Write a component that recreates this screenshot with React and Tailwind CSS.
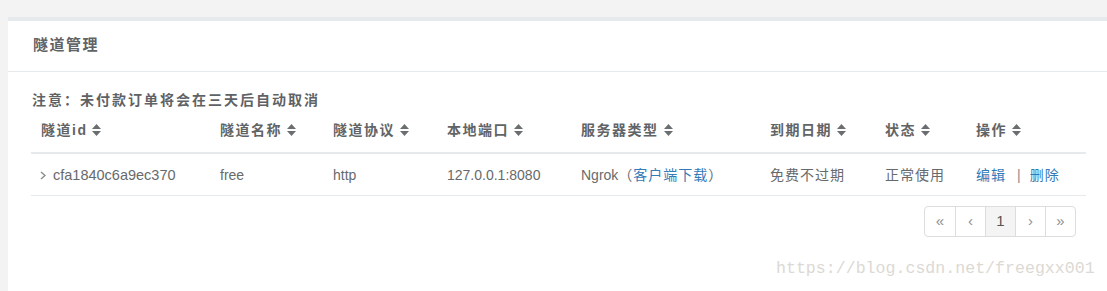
import React from 'react';

const font = { fontFamily: '"Liberation Sans", "Noto Sans CJK SC", sans-serif' };

const SortIcon = () => (
    <svg width="9" height="12" viewBox="0 0 9 12" className="ml-[5px] shrink-0">
        <path d="M4.5 0 L9 5 L0 5 Z" fill="#6b6e70" />
        <path d="M0 7 L9 7 L4.5 12 Z" fill="#6b6e70" />
    </svg>
);

const columns = [
    { label: '隧道id', w: 'w-[180px] pl-[10px]' },
    { label: '隧道名称', w: 'w-[113px] pl-[9px]' },
    { label: '隧道协议', w: 'w-[114px] pl-[9px]' },
    { label: '本地端口', w: 'w-[134px] pl-[9px]' },
    { label: '服务器类型', w: 'w-[189px] pl-[9px]' },
    { label: '到期日期', w: 'w-[115px] pl-[9px]' },
    { label: '状态', w: 'w-[91px] pl-[9px]' },
    { label: '操作', w: 'w-[119px] pl-[9px]' },
];

const pages = ['«', '‹', '1', '›', '»'];

export default function App() {
    return (
        <div className="relative min-h-[291px] bg-[#f3f3f4] pt-[17px] pl-[8px] text-[#676a6c]" style={font}>
            <div className="min-h-[274px] bg-white border-t-4 border-[#e7eaec]">
                {/* 标题 */}
                <div className="h-[51px] pt-[14px] pl-[25px] border-b border-[#e7eaec]">
                    <h5 className="text-[15px] leading-5 font-bold tracking-[1.5px] text-[#616466]">隧道管理</h5>
                </div>

                {/* 内容 */}
                <div className="pl-[23px] pr-[21px] pt-[18px]">
                    <p className="text-[14px] leading-5 font-bold tracking-[2px] pl-[1px] text-[#5f6264]">注意：未付款订单将会在三天后自动取消</p>

                    <div className="mt-[2px]">
                        <div className="flex border-b-2 border-[#e7eaec]">
                            {columns.map((c) => (
                                <div key={c.label} className={`${c.w} pt-2 pb-3 flex items-center text-[14px] leading-5 font-bold tracking-[1.5px] text-[#616466]`}>
                                    <span>{c.label}</span>
                                    <SortIcon />
                                </div>
                            ))}
                        </div>
                        <div className="flex border-b border-[#e7eaec] text-[14px] leading-5 pt-[11px] pb-[10px]">
                            <div className="w-[180px] pl-[9px] flex items-center">
                                <svg width="6" height="9" viewBox="0 0 6 9" className="mr-[7px]">
                                    <path d="M1 1 L5 4.5 L1 8" fill="none" stroke="#8a8c8e" strokeWidth="1.4" />
                                </svg>
                                <span className="text-[14.5px]">cfa1840c6a9ec370</span>
                            </div>
                            <div className="w-[113px] pl-[9px]">free</div>
                            <div className="w-[114px] pl-[9px]">http</div>
                            <div className="w-[134px] pl-[9px]">127.0.0.1:8080</div>
                            <div className="w-[189px] pl-[9px]">
                                Ngrok<span className="tracking-[1px]">（<a className="text-[#337ab7]">客户端下载</a>）</span>
                            </div>
                            <div className="w-[115px] pl-[9px] tracking-[1px]">免费不过期</div>
                            <div className="w-[91px] pl-[9px] tracking-[1px]">正常使用</div>
                            <div className="w-[119px] pl-[9px] flex items-center tracking-[1px]">
                                <a className="text-[#337ab7]">编辑</a>
                                <span className="ml-[11px] mr-[8px] text-[#8a8c8e]">|</span>
                                <a className="text-[#337ab7]">删除</a>
                            </div>
                        </div>

                        {/* 分页 */}
                        <div className="flex justify-end mt-[10px] mr-[10px]">
                            <div className="flex border border-[#dddddd] rounded-[4px] overflow-hidden h-[31px]">
                                {pages.map((p, i) => (
                                    <div
                                        key={i}
                                        className={`w-[30px] flex items-center justify-center ${i > 0 ? 'border-l border-[#dddddd]' : ''} ${p === '1' ? 'bg-[#f4f4f4] text-[#555] text-[15px]' : 'text-[#8f8f8f] text-[15px]'}`}
                                    >
                                        {p}
                                    </div>
                                ))}
                            </div>
                        </div>
                    </div>
                </div>
            </div>

            {/* 水印 */}
            <div
                className="absolute left-[776px] top-[259px] text-[16.6px] leading-5 text-[#dcd9d4] whitespace-nowrap"
                style={{ fontFamily: '"Liberation Mono", monospace' }}
            >
                https://blog.csdn.net/freegxx001
            </div>
        </div>
    );
}
